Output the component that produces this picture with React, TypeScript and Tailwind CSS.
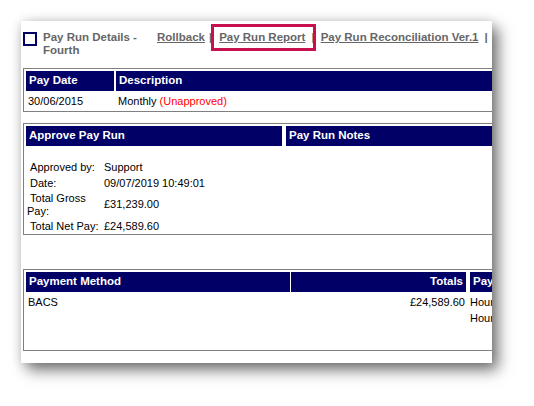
import { Fragment } from "react";

const headCell = "flex h-[20px] items-center bg-[#000066] pl-[3px] text-[11.5px] font-bold text-white";

const approvalRows: { label: React.ReactNode; value: string; h: string }[] = [
  { label: "\u00a0Approved by:", value: "Support", h: "h-[16px]" },
  { label: "\u00a0Date:", value: "09/07/2019 10:49:01", h: "h-[16px]" },
  {
    label: (
      <>
        {"\u00a0Total Gross"}
        <br />
        Pay:
      </>
    ),
    value: "£31,239.00",
    h: "h-[27px]",
  },
  { label: "\u00a0Total Net Pay:", value: "£24,589.60", h: "h-[16px]" },
];

function PageHeader() {
  return (
    <div className="relative flex items-start">
      <div className="mt-[1px] h-[14px] w-[14px] shrink-0 border-2 border-[#000066]" />
      <div className="ml-[6px] w-[108px] shrink-0 text-[11.5px] font-bold leading-[13px] text-[#666666]">
        Pay Run Details - Fourth
      </div>
      <div className="ml-[6px] flex whitespace-nowrap text-[11.5px] font-bold leading-[13px] text-[#666666]">
        <span className="underline">Rollback</span>
        <span className="px-[4px]">|</span>
        <span className="pl-[3px] underline">Pay Run Report</span>
        <span className="px-[6px]">|</span>
        <span className="underline">Pay Run Reconciliation Ver.1</span>
        <span className="px-[6px]">|</span>
        <span className="underline">Pay Run History</span>
      </div>
      {/* annotation box drawn over the link */}
      <div className="absolute left-[188px] top-[-7px] h-[27px] w-[105px] border-[3px] border-[#c8104e]" />
    </div>
  );
}

function PayDateTable() {
  return (
    <div className="mt-[11px] w-[600px] border border-[#808080] p-[2px]">
      <div className="flex gap-[2px]">
        <div className={`${headCell} w-[88px]`}>Pay Date</div>
        <div className={`${headCell} flex-1`}>Description</div>
      </div>
      <div className="mt-[2px] flex h-[16px] items-center gap-[2px]">
        <div className="w-[88px] pl-[2px]">30/06/2015</div>
        <div className="pl-[2px]">
          Monthly <span className="text-[#ff0000]">(Unapproved)</span>
        </div>
      </div>
    </div>
  );
}

function ApproveTable() {
  return (
    <div className="mt-[11px] w-[600px] border border-[#808080] px-[2px] pt-[2px]">
      <div className="flex gap-[4px]">
        <div className={`${headCell} w-[256px]`}>Approve Pay Run</div>
        <div className={`${headCell} flex-1`}>Pay Run Notes</div>
      </div>
      <div className="ml-[1px] mt-[13px] grid grid-cols-[77px_1fr] leading-[13px]">
        {approvalRows.map((row, i) => (
          <Fragment key={i}>
            <div className={`${row.h} flex items-center`}>
              <span>{row.label}</span>
            </div>
            <div className={`${row.h} flex items-center`}>{row.value}</div>
          </Fragment>
        ))}
      </div>
    </div>
  );
}

function PaymentTable() {
  return (
    <div className="mt-[34px] h-[82px] w-[600px] border border-[#808080] p-[2px]">
      <div className="flex">
        <div className={`${headCell} w-[264px]`}>Payment Method</div>
        <div className={`${headCell} ml-[1px] w-[175px] justify-end pr-[3px]`}>Totals</div>
        <div className={`${headCell} ml-[4px] flex-1`}>Pay Elements</div>
      </div>
      <div className="mt-[2px] flex leading-[16px]">
        <div className="w-[264px] pl-[2px]">BACS</div>
        <div className="ml-[1px] w-[175px] pr-[1px] text-right">£24,589.60</div>
        <div className="ml-[4px] flex-1">
          <div>Hourly Rate</div>
          <div>Hourly Rate</div>
        </div>
      </div>
    </div>
  );
}

export default function App() {
  return (
    <div className="min-h-[406px] bg-white p-[21px] font-[Tahoma,'Liberation_Sans',Arial,sans-serif] text-[11px] text-black">
      <div className="h-[342px] w-[471px] overflow-hidden bg-white pl-[2px] pt-[10px] shadow-[6px_7px_14px_rgba(0,0,0,0.55),0_0_10px_rgba(0,0,0,0.12)]">
        <PageHeader />
        <PayDateTable />
        <ApproveTable />
        <PaymentTable />
      </div>
    </div>
  );
}
